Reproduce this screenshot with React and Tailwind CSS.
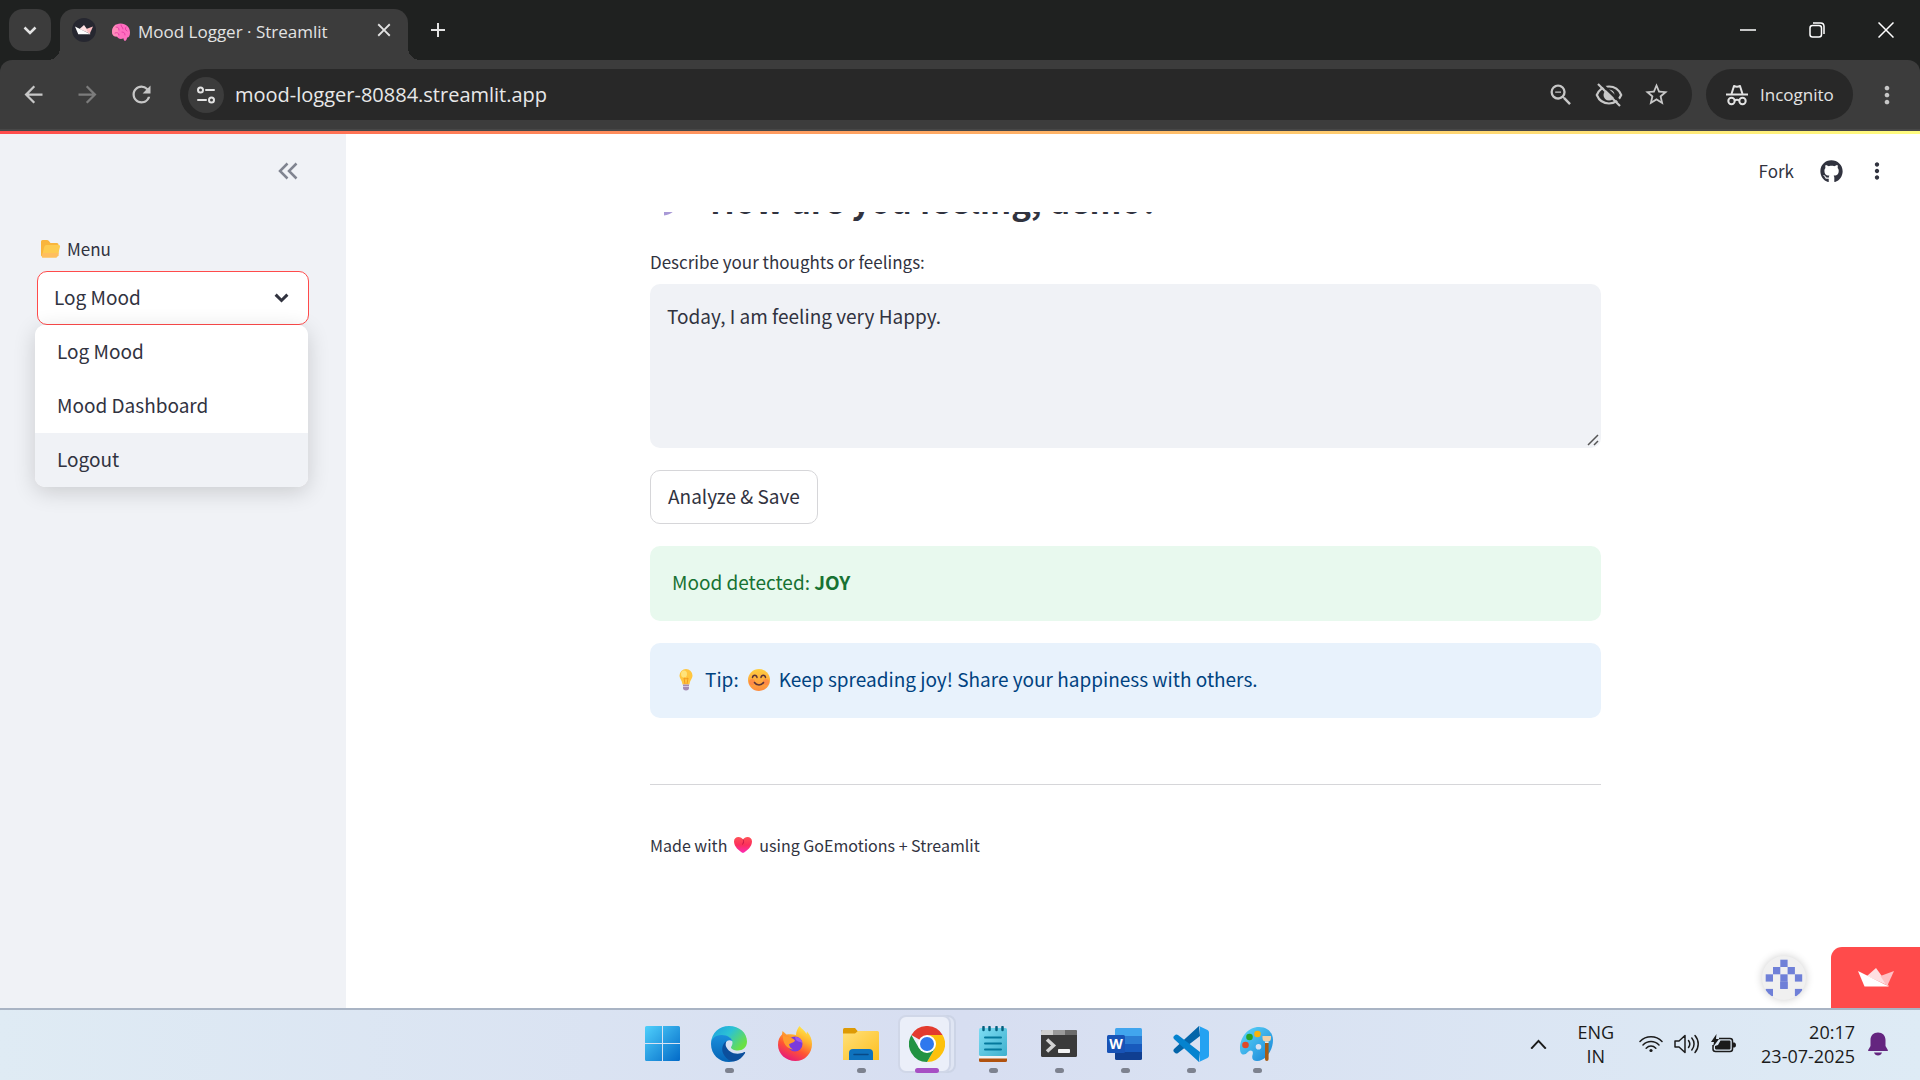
import React from 'react'
import { FaGithub } from 'react-icons/fa'
import {
  MdAdd,
  MdArrowBack,
  MdArrowForward,
  MdClose,
  MdMoreVert,
  MdRefresh,
  MdStarBorder,
  MdZoomOut,
} from 'react-icons/md'

const menuItems = ['Log Mood', 'Mood Dashboard', 'Logout']

/* ---------- emoji ---------- */

function BrainEmoji() {
  return (
    <svg width="20" height="20" viewBox="0 0 20 20" aria-hidden="true">
      <path d="M1 10C1 5 4.500 1.500 9.500 1.500c5.500 0 9.500 3.500 9.500 9 0 3-1 5-3 5.300 0 1.500-.8 2.700-2 3.200-1.300-.5-1.500-1.700-1.500-2.700C10 17.500 7 17 6 14.500 3 15 1 13 1 10Z" fill="#ff6fc0" />
      <path d="M1 10c0-3 1.500-6 4-7.400 2 2 3 5.400 2 11.900l-1 0C3 15 1 13 1 10Z" fill="#ff97b8" opacity=".7" />
      <path d="M5 5c2 0 3 1 3 3M10 3c0 2 2 2 2 4M15 5c-1 1-1 3 1 4M4 11c2-1 4 0 4 2M11 10c2 0 3 1 3 3" fill="none" stroke="#e83fa6" strokeWidth="1" strokeLinecap="round" />
    </svg>
  )
}

function FolderEmoji() {
  return (
    <svg width="20" height="18" viewBox="0 0 20 18" aria-hidden="true">
      <path d="M0 1.500Q0 0 1.500 0H6q1 0 1.700.8L9.500 3H16q1.500 0 1.500 1.500V16H2Q0 17 0 15Z" fill="#f9b53c" />
      <path d="M3.200 7q.5-2 2.300-2h12q2 0 1.500 1.800L16.600 16q-.4 1.500-2 1.500H1.500Q.6 17.500 1 16Z" fill="#fdcb50" />
      <path d="M1.800 13h15.600l-.8 3q-.4 1.500-2 1.500H1.500Q.6 17.500 1 16Z" fill="#ffbe5e" />
    </svg>
  )
}

function SpeechEmoji() {
  return (
    <svg width="38" height="38" viewBox="0 0 38 38" aria-hidden="true">
      <path d="M19 3c9 0 15 6 15 13s-6 14-15 14c-2 0-4 0-5-.8C12 31 8 34 3 34.500V24c-1-2 1-5 1-8C4 9 10 3 19 3Z" fill="#a899d6" />
    </svg>
  )
}

function BulbEmoji() {
  return (
    <svg width="14" height="22" viewBox="0 0 14 22" aria-hidden="true">
      <path d="M7 0a6.500 6.500 0 0 1 6.500 6.500c0 3-2.500 4.500-3 9h-7c-.5-4.500-3-6-3-9A6.500 6.500 0 0 1 7 0Z" fill="#ffc63f" />
      <ellipse cx="5" cy="5" rx="3" ry="3.500" fill="#ffe37a" />
      <path d="M6 15 5 9l2 1 2-1-1 6" fill="none" stroke="#f39a1f" strokeWidth="1" />
      <path d="M4 15.500h6v3.500q0 2-3 2.500-3-.5-3-2.500Z" fill="#a58bb3" />
      <path d="M4 17.500h6" stroke="#d8c8df" strokeWidth="1" />
    </svg>
  )
}

function SmileEmoji() {
  return (
    <svg width="24" height="24" viewBox="0 0 24 24" aria-hidden="true">
      <defs>
        <linearGradient id="smile" x1="0" y1="0" x2="0" y2="1">
          <stop offset="0" stopColor="#ffcf3f" />
          <stop offset="1" stopColor="#fd8b3e" />
        </linearGradient>
      </defs>
      <circle cx="12" cy="12" r="11" fill="url(#smile)" />
      <circle cx="5" cy="14" r="3" fill="#ff7250" opacity=".5" />
      <circle cx="19" cy="14" r="3" fill="#ff7250" opacity=".5" />
      <path d="M5.500 9.500C6 6.500 9.500 6.500 10 9.500M14 9.500c.5-3 4-3 4.500 0M7.500 14.500c2 3.300 7 3.300 9 0" fill="none" stroke="#5b3339" strokeWidth="1.500" strokeLinecap="round" />
    </svg>
  )
}

function HeartEmoji() {
  return (
    <svg width="20" height="18" viewBox="0 0 20 18" aria-hidden="true">
      <defs>
        <linearGradient id="heart" x1="0" y1="0" x2="0" y2="1">
          <stop offset="0" stopColor="#ff5257" />
          <stop offset=".5" stopColor="#fb2f5c" />
          <stop offset="1" stopColor="#fc2bb8" />
        </linearGradient>
      </defs>
      <path d="M10 17C6 15 1 10.500 1 5.500 1 2.500 3 1 5.500 1 7.500 1 9 2 10 3.500 11 2 12.500 1 14.500 1 17 1 19 2.500 19 5.500 19 10.500 14 15 10 17Z" fill="url(#heart)" />
      <path d="M10 3.500c.8 1 .8 3-.5 5" fill="none" stroke="#c51345" strokeWidth="1" />
    </svg>
  )
}

/* ---------- browser icons ---------- */

function StreamlitCrown({ width, className }) {
  return (
    <svg width={width} viewBox="0 0 36 19" className={className} aria-hidden="true">
      <path d="M18 0 31 18 9 8Z" fill="#ffdfe2" />
      <path d="M36 3 29 18.500 22.500 8Z" fill="#ffbfc3" />
      <path d="M0 3 31 18.500H6.500Z" fill="#fff" />
    </svg>
  )
}

function TuneIcon() {
  return (
    <svg width="20" height="20" viewBox="0 0 20 20" fill="none" stroke="#e3e3e3" strokeWidth="2" aria-hidden="true">
      <circle cx="4.500" cy="5" r="2.500" />
      <path d="M10 5h8M2 15h8" strokeLinecap="round" />
      <circle cx="15.500" cy="15" r="2.500" />
    </svg>
  )
}

function EyeOffIcon() {
  return (
    <svg width="28" height="24" viewBox="0 0 28 24" fill="none" aria-hidden="true">
      <path d="M14 3.500c5.500 0 10 3.300 12.200 8.500-2.200 5.200-6.700 8.500-12.200 8.500S4 17.200 1.800 12C4 6.800 8.500 3.500 14 3.500Z" stroke="#c7c7c7" strokeWidth="2.200" />
      <circle cx="14" cy="12" r="5.500" fill="#c7c7c7" />
      <path d="M5.500 0 28 21.500" stroke="#282828" strokeWidth="3" />
      <path d="M3 1l22 22" stroke="#c7c7c7" strokeWidth="2.200" />
    </svg>
  )
}

function IncognitoIcon() {
  return (
    <svg width="22" height="22" viewBox="0 0 22 22" fill="none" stroke="#e3e3e3" strokeWidth="2" aria-hidden="true">
      <path d="M0 10.500h22" />
      <path d="M5.500 10 8 2q3 1.300 6 0l2.500 8" strokeLinejoin="round" />
      <circle cx="5.500" cy="17" r="3.200" />
      <circle cx="16.500" cy="17" r="3.200" />
      <path d="M8.500 16.500q2.500-1.500 5 0" />
    </svg>
  )
}

function Chevron({ width, stroke, strokeWidth, up }) {
  return (
    <svg width={width} viewBox="0 0 14 9" fill="none" stroke={stroke} strokeWidth={strokeWidth} className="pointer-events-none" aria-hidden="true">
      <path d={up ? 'M1 8 7 1.500 13 8' : 'M1.500 1.500 7 7 12.500 1.500'} />
    </svg>
  )
}

/* ---------- taskbar icons ---------- */

function WindowsIcon() {
  return (
    <svg width="36" height="36" viewBox="0 0 36 36" aria-hidden="true">
      <defs>
        <linearGradient id="win" x1="0" y1="0" x2="36" y2="36" gradientUnits="userSpaceOnUse">
          <stop offset="0" stopColor="#4fd0fc" />
          <stop offset="1" stopColor="#0067c6" />
        </linearGradient>
      </defs>
      <path d="M1.500 0H17v17H0V1.500Q0 0 1.500 0ZM18 0h15.500Q35 0 35 1.500V17H18ZM0 18h17v17H1.500Q0 35 0 33.500ZM18 18h17v15.500q0 1.500-1.500 1.500H18Z" fill="url(#win)" />
    </svg>
  )
}

function EdgeIcon() {
  return (
    <svg width="36" height="36" viewBox="0 0 36 36" aria-hidden="true">
      <defs>
        <linearGradient id="edgeTop" x1="0" y1="0" x2="1" y2=".6">
          <stop offset="0" stopColor="#1b9de2" />
          <stop offset=".5" stopColor="#2cc2d4" />
          <stop offset="1" stopColor="#6be044" />
        </linearGradient>
        <linearGradient id="edgeLeft" x1="0" y1="0" x2="0" y2="1">
          <stop offset="0" stopColor="#1a8fdc" />
          <stop offset="1" stopColor="#0563b5" />
        </linearGradient>
      </defs>
      <path d="M0 17C.5 7 8 0 18 0c10.500 0 18 7 18 15.500 0 6-4.500 9-9 9-4 0-7-1.500-7-3 0-1 1.500-2 1.500-4.500 0-4-4-7-9.500-7C6 10 2 12.500 0 17Z" fill="url(#edgeTop)" />
      <path d="M0 18c0-5 4-9 10.500-9 6 0 10 3 11 6-6-3-9 3-6.500 9 2.500 6 8 10 13 9-3 2-6.500 3-10 3C8 36 0 28.500 0 18Z" fill="url(#edgeLeft)" />
      <path d="M15.500 15C11 18 10 24 13 29c3 4.500 7 6.800 10.500 6.300 4.500-1 8-4 10.500-8 .5-1-.5-1.500-1.200-1C25 30 17 26 14.800 20c-.4-2 0-4 .7-5Z" fill="#0c4f9c" />
    </svg>
  )
}

function FirefoxIcon() {
  return (
    <svg width="36" height="36" viewBox="0 0 36 36" aria-hidden="true">
      <defs>
        <linearGradient id="fox" x1=".8" y1="0" x2=".3" y2="1">
          <stop offset="0" stopColor="#fff04d" />
          <stop offset=".35" stopColor="#ffb02e" />
          <stop offset=".65" stopColor="#ff5433" />
          <stop offset="1" stopColor="#e5167f" />
        </linearGradient>
      </defs>
      <path d="M22.500 0c2 3 5.500 4.500 7 8l.5-2.500c3.500 4 5 8 5 12.500 0 9.500-7 17-16.500 17S1 28 1 19c0-5 1.500-8 4-10.500L5.500 5l4 3.500C13 8 16 8 19 9c0-3.500 1.500-6.500 3.500-9Z" fill="url(#fox)" />
      <circle cx="18" cy="18" r="7.500" fill="#7b3bdc" />
      <path d="M18 11c4 0 7 2 7.500 6-3-2-6-1-7-4Z" fill="#a05af0" />
      <path d="M6 9c4 3 8 1 12 5.500-1 2.500-4 2-6 4 .5 2 2 4 4 5-6-.5-11-7-10-14.500Z" fill="#ff9a2d" />
    </svg>
  )
}

function ExplorerIcon() {
  return (
    <svg width="36" height="36" viewBox="0 0 36 36" aria-hidden="true">
      <defs>
        <linearGradient id="dir" x1="0" y1="0" x2="1" y2="1">
          <stop offset="0" stopColor="#ffe07a" />
          <stop offset="1" stopColor="#fdbf1f" />
        </linearGradient>
      </defs>
      <path d="M1.500 2H12l3 3.500L12 9H0V3.500Q0 2 1.500 2Z" fill="#dd9a05" />
      <path d="M0 7.500h12L15 5h19.500Q36 5 36 6.500V34H0Z" fill="url(#dir)" />
      <path d="M6 34V27q0-4 4-4h16q4 0 4 4v7Z" fill="#0e72bd" />
      <path d="M11 28.500h14" stroke="#084a86" strokeWidth="1.500" strokeLinecap="round" />
    </svg>
  )
}

function ChromeIcon() {
  return (
    <svg width="36" height="36" viewBox="0 0 36 36" aria-hidden="true">
      <path d="M18 18 2.400 9A18 18 0 0 1 33.600 9L18 9Z" fill="#e33b2e" />
      <path d="M18 9H33.600A18 18 0 0 1 18 36L25.800 22.500Z" fill="#fdc10c" />
      <path d="M2.400 9A18 18 0 0 0 18 36L25.800 22.500 10.200 22.500Z" fill="#229342" />
      <circle cx="18" cy="18" r="9" fill="#fff" />
      <circle cx="18" cy="18" r="7" fill="#2f78ee" />
    </svg>
  )
}

function NotepadIcon() {
  return (
    <svg width="30" height="36" viewBox="0 0 30 36" aria-hidden="true">
      <defs>
        <linearGradient id="note" x1="0" y1="0" x2="1" y2="1">
          <stop offset="0" stopColor="#7dddf4" />
          <stop offset="1" stopColor="#3fb0cd" />
        </linearGradient>
      </defs>
      <path d="M1 31h28v3.500q0 1.500-1.500 1.500h-25Q1 36 1 34.500Z" fill="#b0520f" />
      <path d="M1 29h28v3.500H1Z" fill="#f2f2f2" />
      <path d="M1 3.500Q1 2 2.500 2h25Q29 2 29 3.500V28.500q0 1.500-1.500 1.500h-25Q1 30 1 28.500Z" fill="url(#note)" />
      <path d="M5.500 1v3M11.500 1v3M18.500 1v3M24.500 1v3" stroke="#04607f" strokeWidth="2.500" strokeLinecap="round" />
      <path d="M7 11.500h16M7 17.500h16M7 23.500h16" stroke="#04789c" strokeWidth="2" strokeLinecap="round" />
    </svg>
  )
}

function TerminalIcon() {
  return (
    <svg width="36" height="36" viewBox="0 0 36 36" aria-hidden="true">
      <rect x="0" y="4" width="36" height="27" rx="1.500" fill="#3a3a3a" />
      <path d="M1.500 4H12v5H0V5.500Q0 4 1.500 4Z" fill="#cfcfcf" />
      <path d="M12 4h12v5H12Z" fill="#9a9a9a" />
      <path d="M24 4h10.500Q36 4 36 5.500V9H24Z" fill="#6b6b6b" />
      <path d="m6 13.500 6.500 6L6 25.500" fill="none" stroke="#d3d3d3" strokeWidth="3.500" />
      <rect x="17" y="23" width="12" height="4" rx=".8" fill="#f2f2f2" />
    </svg>
  )
}

function WordIcon() {
  return (
    <svg width="36" height="36" viewBox="0 0 36 36" aria-hidden="true">
      <path d="M9.500 2h24Q35 2 35 3.500V10H8V3.500Q8 2 9.500 2Z" fill="#41a5ee" />
      <path d="M8 10h27v8H8Z" fill="#2b7cd3" />
      <path d="M8 18h27v8H8Z" fill="#185abd" />
      <path d="M8 26h27v6.500q0 1.500-1.500 1.500h-24Q8 34 8 32.500Z" fill="#103f91" />
      <rect x="0" y="9" width="18" height="18" rx="1.500" fill="#1853b6" />
      <text x="9" y="23" textAnchor="middle" fill="#fff" fontSize="14" fontWeight="700" fontFamily="Open Sans, sans-serif">W</text>
    </svg>
  )
}

function CodeIcon() {
  return (
    <svg width="36" height="36" viewBox="0 0 36 36" aria-hidden="true">
      <path d="M26 0 1.500 22.500Q-.5 24.500 1 26l1.500 1.200Q3.800 28 5 27L27 10Z" fill="#0465a9" />
      <path d="M26 36 1.500 13.500Q-.5 11.500 1 10l1.500-1.200Q3.800 8 5 9L27 26Z" fill="#0583cf" />
      <path d="M26 0l8.500 4Q36 4.800 36 6.500v23q0 1.700-1.500 2.500L26 36q1-1 1-3V3q0-2-1-3Z" fill="#24a2f2" />
    </svg>
  )
}

function PaintIcon() {
  return (
    <svg width="36" height="36" viewBox="0 0 36 36" aria-hidden="true">
      <defs>
        <linearGradient id="palette" x1="0" y1="0" x2="1" y2="1">
          <stop offset="0" stopColor="#5fd8fb" />
          <stop offset="1" stopColor="#1583d6" />
        </linearGradient>
      </defs>
      <path d="M20 1c9 0 14 6 14 13 0 10-7 21-16 21-4 0-5.500-2.500-4.500-6 1-3 0-4.500-2-4.500-2.500 0-3.500 4-7 4-2.500 0-3.500-2.500-3.500-6C1 11 9 1 20 1Zm-.5 17a2.800 2.800 0 1 0 0 5.600 2.800 2.800 0 0 0 0-5.600Z" fill="url(#palette)" />
      <circle cx="6.500" cy="19" r="3.300" fill="#e0492a" />
      <circle cx="10.500" cy="11" r="3.300" fill="#27a327" />
      <circle cx="18.500" cy="8" r="3.300" fill="#f9b30b" />
      <path d="M23.500 10h8.500v2q0 3-2.500 3.500h-3.500Q23.500 15 23.500 12Z" fill="#efcfa6" />
      <path d="M26 15.500h3.600v1.500H26Z" fill="#e8e8e8" />
      <path d="M26 17h3.600v16q0 2-1.800 2T26 33Z" fill="#a55c14" />
    </svg>
  )
}

function WifiIcon() {
  return (
    <svg width="24" height="18" viewBox="0 0 24 18" fill="none" stroke="#1b1b1b" strokeWidth="1.500" strokeLinecap="round" aria-hidden="true">
      <path d="M1 6.500C7 .2 17 .2 23 6.500M4 10c4.500-4.700 11.500-4.700 16 0M7.200 13.200c2.700-2.800 6.900-2.800 9.600 0" />
      <circle cx="12" cy="15.500" r="1.600" fill="#1b1b1b" stroke="none" />
    </svg>
  )
}

function VolumeIcon() {
  return (
    <svg width="26" height="20" viewBox="0 0 26 20" fill="none" stroke="#1b1b1b" strokeWidth="1.500" strokeLinecap="round" strokeLinejoin="round" aria-hidden="true">
      <path d="M1 7h4l6-5.500v17L5 13H1Z" />
      <path d="M14.500 6.500c1.500 2 1.500 5 0 7M17.800 4c3 3.500 3 8.500 0 12M21 1.500c4.300 5 4.300 12 0 17" />
    </svg>
  )
}

function BatteryIcon() {
  return (
    <svg width="26" height="20" viewBox="0 0 26 20" aria-hidden="true">
      <path d="M8 4.500h11q2.500 0 2.500 2.500v8q0 2.500-2.500 2.500H4.500Q2 17.500 2 15V11" fill="none" stroke="#1b1b1b" strokeWidth="1.500" />
      <path d="M9.500 6.500h9q1 0 1 1v7q0 1-1 1H4.800L4 14.500V12l3-1Z" fill="#1b1b1b" />
      <path d="M22 8.500h1.500Q25 9 25 11t-1.500 2.500H22Z" fill="#1b1b1b" />
      <path d="M5.500 0 0 8h3L2 13 8 5H5Z" fill="#1b1b1b" />
    </svg>
  )
}

function BellIcon() {
  return (
    <svg width="20" height="24" viewBox="0 0 20 24" aria-hidden="true">
      <path d="M10 .5c4.500 0 7.500 3 7.500 7.500v6l2.300 4q.4 1-.8 1H1q-1.200 0-.8-1l2.300-4V8C2.500 3.500 5.500.5 10 .5Z" fill="#64257f" />
      <path d="M6 20.500h8q-1 3-4 3t-4-3Z" fill="#64257f" />
    </svg>
  )
}

const taskbarApps = [
  { name: 'Start', Icon: WindowsIcon },
  { name: 'Edge', Icon: EdgeIcon, running: true },
  { name: 'Firefox', Icon: FirefoxIcon },
  { name: 'File Explorer', Icon: ExplorerIcon, running: true },
  { name: 'Chrome', Icon: ChromeIcon, active: true },
  { name: 'Notepad', Icon: NotepadIcon, running: true },
  { name: 'Terminal', Icon: TerminalIcon, running: true },
  { name: 'Word', Icon: WordIcon, running: true },
  { name: 'Visual Studio Code', Icon: CodeIcon, running: true },
  { name: 'Paint', Icon: PaintIcon, running: true },
]

/* ---------- sections ---------- */

function TabStrip() {
  return (
    <div className="flex h-[60px] items-end bg-[#1f2120] pl-[9px] text-[#e3e3e3]">
      <button aria-label="Search tabs" className="mb-[9px] flex h-[42px] w-[42px] items-center justify-center rounded-[14px] bg-[#3c3c3c]">
        <Chevron width="14" stroke="#e3e3e3" strokeWidth="2.5" />
      </button>
      <div className="relative ml-[9px] flex h-[51px] w-[348px] items-center rounded-t-[14px] bg-[#3c3c3c] pl-3 pr-[13px] pb-[9px]">
        <div className="absolute -left-3 bottom-0 h-3 w-3 bg-[radial-gradient(circle_at_0_0,#1f2120_12px,#3c3c3c_12px)]" />
        <div className="absolute -right-3 bottom-0 h-3 w-3 bg-[radial-gradient(circle_at_100%_0,#1f2120_12px,#3c3c3c_12px)]" />
        <div className="flex h-6 w-6 items-center justify-center rounded-full bg-[#262730]">
          <StreamlitCrown width="18" />
        </div>
        <div className="ml-[15px] mt-[3px] flex items-center gap-[7px] text-[17px] leading-6">
          <BrainEmoji />
          <span className="whitespace-nowrap">Mood Logger · Streamlit</span>
        </div>
        <button aria-label="Close tab" className="ml-auto">
          <MdClose size={22} />
        </button>
      </div>
      <button aria-label="New tab" className="mb-[18px] ml-[18px]">
        <MdAdd size={24} />
      </button>
      <div className="ml-auto flex h-full items-center text-white">
        <button aria-label="Minimize" className="flex h-full w-[69px] items-center justify-center">
          <svg width="16" height="16" viewBox="0 0 16 16" stroke="#fff" strokeWidth="1.500"><path d="M0 8h16" /></svg>
        </button>
        <button aria-label="Restore" className="flex h-full w-[69px] items-center justify-center">
          <svg width="16" height="16" viewBox="0 0 16 16" fill="none" stroke="#fff" strokeWidth="1.500">
            <rect x="1" y="3.500" width="11.500" height="11.500" rx="2.500" />
            <path d="M4 1h7.500Q15 1 15 4.500V12" />
          </svg>
        </button>
        <button aria-label="Close window" className="flex h-full w-[69px] items-center justify-center">
          <svg width="16" height="16" viewBox="0 0 16 16" stroke="#fff" strokeWidth="1.500"><path d="m.5.5 15 15m0-15-15 15" /></svg>
        </button>
      </div>
    </div>
  )
}

function Toolbar() {
  return (
    <div className="bg-[#1f2120]">
      <div className="flex h-[71px] items-center rounded-t-xl border-b-2 border-[#474747] bg-[#3c3c3c] pl-5 pr-[19px]">
        <div className="flex w-[160px] items-center gap-[27px] text-[#c7c7c7]">
          <button aria-label="Back"><MdArrowBack size={27} /></button>
          <button aria-label="Forward" className="text-[#7c7c7c]"><MdArrowForward size={27} /></button>
          <button aria-label="Reload"><MdRefresh size={27} /></button>
        </div>
        <div className="flex h-[51px] flex-1 items-center rounded-full bg-[#282828] pl-2 pr-[22px] text-[#c7c7c7]">
          <button aria-label="View site information" className="flex h-9 w-9 shrink-0 items-center justify-center rounded-full bg-[#3c3c3c]">
            <TuneIcon />
          </button>
          <input
            aria-label="Address"
            defaultValue="mood-logger-80884.streamlit.app"
            className="ml-[11px] min-w-0 flex-1 bg-transparent text-[20px] leading-7 text-[#e8e8e8] outline-none"
          />
          <div className="flex items-center gap-5">
            <button aria-label="Zoom"><MdZoomOut size={28} /></button>
            <button aria-label="Third-party cookies blocked"><EyeOffIcon /></button>
            <button aria-label="Bookmark this tab"><MdStarBorder size={27} /></button>
          </div>
        </div>
        <div className="ml-[14px] flex h-[51px] w-[147px] items-center gap-3 rounded-full bg-[#282828] pl-5 text-[17px] text-[#e3e3e3]">
          <IncognitoIcon />
          Incognito
        </div>
        <button aria-label="Chrome menu" className="ml-5 text-[#c7c7c7]">
          <MdMoreVert size={28} />
        </button>
      </div>
    </div>
  )
}

function Sidebar() {
  const [page, setPage] = React.useState('Log Mood')

  return (
    <aside className="flex w-[346px] shrink-0 flex-col bg-[#f0f2f6] pl-[37px] pr-[37px] pt-7">
      <button aria-label="Collapse sidebar" className="mr-[11px] self-end">
        <svg width="20" height="18" viewBox="0 0 20 18" fill="none" stroke="#808490" strokeWidth="2.500">
          <path d="M9.500 1.500 2 9l7.500 7.500M18.500 1.500 11 9l7.500 7.500" />
        </svg>
      </button>
      <label htmlFor="menu" className="mt-14 flex items-center gap-1.5 pl-1 text-[17px] leading-[26px]">
        <FolderEmoji />
        Menu
      </label>
      <div className="relative mt-[9px]">
        <select
          id="menu"
          value={page}
          onChange={(e) => setPage(e.target.value)}
          className="h-[54px] w-full appearance-none rounded-[10px] border border-[#ff4b4b] bg-white pb-0.5 pl-4 text-[19px] outline-none"
        >
          {menuItems.map((item) => (
            <option key={item}>{item}</option>
          ))}
        </select>
        <div className="pointer-events-none absolute inset-y-0 right-5 flex items-center">
          <Chevron width="15" stroke="#31333f" strokeWidth="2.8" />
        </div>
        <ul className="absolute -left-0.5 right-px top-full overflow-hidden rounded-[10px] bg-white shadow-[0_5px_22px_rgba(0,0,0,0.16)]">
          {menuItems.map((item) => (
            <li key={item}>
              <button
                onClick={() => setPage(item)}
                className={`block h-[54px] w-full pb-0.5 pl-[22px] text-left text-[19px] ${item === 'Logout' ? 'bg-[#f0f2f6]' : 'bg-white'}`}
              >
                {item}
              </button>
            </li>
          ))}
        </ul>
      </div>
    </aside>
  )
}

function MoodForm() {
  return (
    <div className="mx-auto flex w-full max-w-[951px] flex-col">
      <h2 className="-mt-9 flex items-center gap-[11px] pl-[11px] text-[33px] font-bold leading-[48px]">
        <SpeechEmoji />
        How are you feeling, demo?
      </h2>
      <label htmlFor="thoughts" className="mt-[25px] text-[17px] leading-[26px]">
        Describe your thoughts or feelings:
      </label>
      <div className="relative mt-[9px]">
        <textarea
          id="thoughts"
          defaultValue="Today, I am feeling very Happy."
          className="block h-[164px] w-full resize-none rounded-[10px] bg-[#f0f2f6] px-[17px] py-[17px] text-[19px] leading-[30px] outline-none"
        />
        <svg width="12" height="12" viewBox="0 0 12 12" className="absolute bottom-0.5 right-0.5" stroke="#555" strokeWidth="1.500" aria-hidden="true">
          <path d="M1 11 11 1M7 11l4-4" />
        </svg>
      </div>
      <button className="mt-[22px] h-[54px] self-start rounded-[10px] border border-[#d6d6d9] bg-white px-[17px] pb-0.5 text-[19px]">
        Analyze &amp; Save
      </button>
      <div className="mt-[22px] flex h-[75px] items-center rounded-[10px] bg-[#e8f9ee] px-[22px] pb-0.5 text-[19px] text-[#177233]">
        <p>Mood detected: <strong>JOY</strong></p>
      </div>
      <div className="mt-[22px] flex h-[75px] items-center rounded-[10px] bg-[#e8f2fc] pb-0.5 pl-[29px] pr-[22px] text-[19px] text-[#004280]">
        <BulbEmoji />
        <span className="ml-3 mr-2">Tip:</span>
        <SmileEmoji />
        <span className="ml-2">Keep spreading joy! Share your happiness with others.</span>
      </div>
      <hr className="mt-[66px] border-t border-[#d6d6d9]" />
      <p className="mt-[47px] flex items-center gap-1.5 text-[16px] leading-[26px]">
        Made with <HeartEmoji /> using GoEmotions + Streamlit
      </p>
    </div>
  )
}

// 5x5 identicon, one string per row
const identicon = ['00100', '01010', '10101', '00100', '10001']

function HostBadges() {
  return (
    <div className="absolute bottom-0 right-0 flex items-end">
      <a href="#profile" aria-label="App creator" className="mb-2 mr-[25px] flex h-11 w-11 items-center justify-center overflow-hidden rounded-full bg-[#f0f0f0] shadow-[0_0_8px_rgba(0,0,0,0.2)]">
        <svg width="44" height="44" viewBox="0 0 44 44">
          {identicon.map((row, y) =>
            row.split('').map((cell, x) =>
              cell === '1' ? <rect key={`${x}-${y}`} x={3.7 + x * 7.3} y={3.7 + y * 7.3} width="7.3" height="7.3" fill="#6f80d8" /> : null
            )
          )}
          <rect x="18.3" y="25.6" width="7.3" height="7.3" fill="#6f80d8" />
        </svg>
      </a>
      <a href="#streamlit" aria-label="Hosted with Streamlit" className="flex h-[61px] w-[89px] items-center justify-center rounded-tl-[11px] bg-[#ff4b4b]">
        <StreamlitCrown width="36" />
      </a>
    </div>
  )
}

function Taskbar() {
  return (
    <footer className="grid h-[72px] grid-cols-[1fr_auto_1fr] border-t-2 border-[#a9b4c4] bg-linear-to-r from-[#dfebf4] via-[#d7def1] to-[#deebf5] text-[18px] leading-6 text-[#1b1b1b]">
      <div />
      <div className="flex items-center">
        {taskbarApps.map(({ name, Icon, running, active }) => (
          <div key={name} className="relative flex h-full w-[66px] items-center justify-center pb-0.5">
            {active && <div className="absolute right-1 top-[5px] h-[58px] w-14 rounded-lg border-2 border-[#ccd4e6] bg-[#dfe5f3]" />}
            {active && <div className="absolute right-[9px] top-[5px] h-[58px] w-[53px] rounded-lg border-2 border-[#d0d7e8] bg-[#ebeff9]" />}
            <button aria-label={name} className="relative">
              <Icon />
            </button>
            {running && <span className="absolute bottom-[7px] h-[5px] w-[9px] rounded-full bg-[#7d828f]" />}
            {active && <span className="absolute bottom-[7px] h-[5px] w-6 rounded-full bg-[#a74fc4]" />}
          </div>
        ))}
      </div>
      <div className="flex items-center justify-end pb-0.5 pr-8">
        <button aria-label="Show hidden icons" className="mr-[30px]">
          <Chevron width="17" stroke="#1b1b1b" strokeWidth="1.6" up />
        </button>
        <div className="mr-[25px] text-center">
          <p>ENG</p>
          <p>IN</p>
        </div>
        <div className="mr-6 flex items-center gap-[11px]">
          <WifiIcon />
          <VolumeIcon />
          <BatteryIcon />
        </div>
        <div className="mr-[13px] text-right">
          <p>20:17</p>
          <p>23-07-2025</p>
        </div>
        <BellIcon />
      </div>
    </footer>
  )
}

export default function App() {
  return (
    <div className="flex h-screen flex-col overflow-hidden bg-white font-['Open_Sans','Noto_Sans',sans-serif]">
      <TabStrip />
      <Toolbar />
      <div className="h-[3px] shrink-0 bg-linear-to-r from-[#ff4b4b] to-[#fffd80]" />
      <div className="relative flex min-h-0 flex-1 font-['Noto_Sans_CJK_SC',sans-serif] text-[#31333f]">
        <Sidebar />
        <main className="flex min-w-0 flex-1 flex-col">
          <header className="flex h-[78px] shrink-0 items-center justify-end pb-1 pr-[30px]">
            <button className="text-[17px]">Fork</button>
            <a href="#github" aria-label="View on GitHub" className="ml-[26px]">
              <FaGithub size={23} />
            </a>
            <button aria-label="App menu" className="ml-[21px]">
              <MdMoreVert size={26} />
            </button>
          </header>
          <div className="min-h-0 flex-1 overflow-hidden pr-[15px]">
            <MoodForm />
          </div>
        </main>
        <HostBadges />
      </div>
      <Taskbar />
    </div>
  )
}
